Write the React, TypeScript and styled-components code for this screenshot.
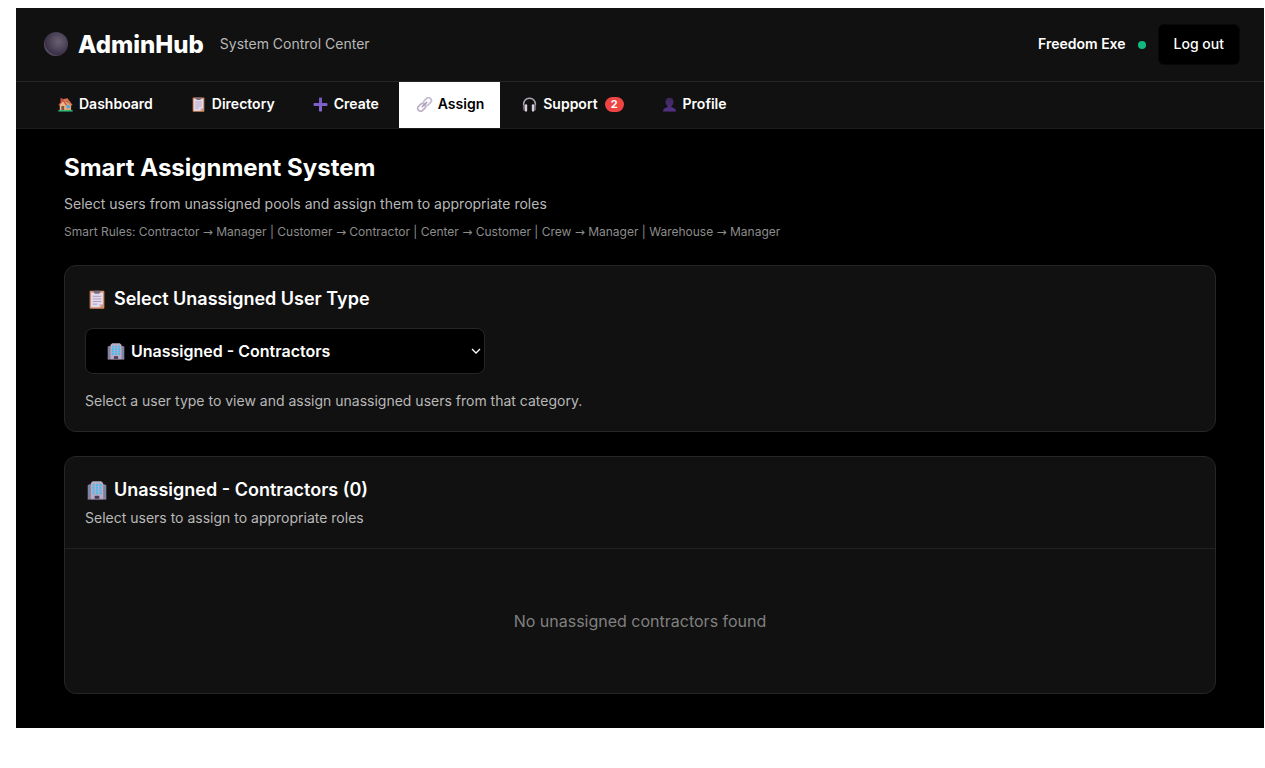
import React from "react";
import styled, { createGlobalStyle } from "styled-components";

const GlobalStyle = createGlobalStyle`
  *, *::before, *::after { box-sizing: border-box; }
  body {
    margin: 8px 1px 0 16px;
    background: #fff;
    color: #fff;
    font-family: Inter, "Liberation Sans", sans-serif;
    font-size: 14px;
  }
  h1, h2, h3, p { margin: 0; }
`;

const Shell = styled.div`
  background: #000;
`;

const Header = styled.header`
  display: flex;
  align-items: center;
  justify-content: space-between;
  padding: 16px 24px;
  background: #111;
  border-bottom: 1px solid #262626;
`;

const Group = styled.div<{ $gap: number }>`
  display: flex;
  align-items: center;
  gap: ${(p) => p.$gap}px;
`;

const Glyph = styled.svg<{ $size: number; $box: number }>`
  display: block;
  flex: none;
  width: ${(p) => p.$box}px;
  height: ${(p) => p.$size}px;
`;

const Brand = styled.h1`
  display: flex;
  align-items: center;
  gap: 6px;
  font-size: 24px;
  line-height: 31px;
  font-weight: 800;
`;

const HeaderText = styled.span<{ $strong?: boolean }>`
  padding-bottom: 2px;
  color: ${(p) => (p.$strong ? "#fff" : "#b8b8b8")};
  font-weight: ${(p) => (p.$strong ? 600 : 400)};
  line-height: 21px;
`;

const StatusDot = styled.span`
  width: 8px;
  height: 8px;
  border-radius: 50%;
  background: #10b981;
`;

const LogoutButton = styled.button`
  height: 41px;
  padding: 0 15px 2px;
  border: 1px solid #080808;
  border-radius: 6px;
  background: #000;
  color: #fff;
  font: 500 14px/21px Inter, "Liberation Sans", sans-serif;
`;

const Nav = styled.nav`
  display: flex;
  gap: 4px;
  padding: 0 24px;
  background: #111;
  border-bottom: 1px solid #1c1c1c;
`;

const Tab = styled.a<{ $active?: boolean }>`
  display: flex;
  align-items: center;
  gap: 4px;
  height: 46px;
  padding: 0 16px 2px;
  font-weight: 600;
  line-height: 20px;
  text-decoration: none;
  color: ${(p) => (p.$active ? "#000" : "#fff")};
  background: ${(p) => (p.$active ? "#fff" : "transparent")};
`;

const Badge = styled.span`
  margin-left: 3px;
  padding: 0 6px;
  border-radius: 10px;
  background: #ef4444;
  color: #fff;
  font-size: 11px;
  line-height: 15px;
  font-weight: 700;
`;

const Main = styled.main`
  display: flex;
  flex-direction: column;
  gap: 24px;
  padding: 24px 48px 34px;
`;

const Title = styled.h2`
  margin-bottom: 10px;
  font-size: 24px;
  line-height: 30px;
  font-weight: 700;
`;

const Note = styled.p`
  color: #b8b8b8;
  line-height: 21px;
`;

const Rules = styled.p`
  margin-top: 8px;
  color: #8c8c8c;
  font-size: 12px;
  line-height: 19px;
`;

const Arrow = styled.span`
  font-family: "DejaVu Sans", sans-serif;
  line-height: 1;
`;

const Card = styled.section`
  background: #111;
  border: 1px solid #262626;
  border-radius: 12px;
`;

const CardSection = styled.div<{ $gap: number; $ruled?: boolean }>`
  display: flex;
  flex-direction: column;
  gap: ${(p) => p.$gap}px;
  padding: 20px;
  border-bottom: ${(p) => (p.$ruled ? "1px solid #222" : "none")};
`;

const CardTitle = styled.h3`
  display: flex;
  align-items: center;
  gap: 5px;
  font-size: 18px;
  line-height: 26px;
  font-weight: 600;
`;

const SelectWrap = styled.div`
  position: relative;
  max-width: 400px;
`;

const SelectIcon = styled.span<{ $end?: boolean }>`
  position: absolute;
  top: 0;
  bottom: 0;
  ${(p) => (p.$end ? "right: 4px;" : "left: 20px;")}
  display: flex;
  align-items: center;
  pointer-events: none;
`;

const TypeSelect = styled.select`
  display: block;
  width: 100%;
  height: 46px;
  padding: 0 20px 0 45px;
  border: 1px solid #262626;
  border-radius: 8px;
  appearance: none;
  background: #000;
  color: #fff;
  font: 600 16px/20px Inter, "Liberation Sans", sans-serif;
`;

const Empty = styled.p`
  padding: 60px 20px;
  text-align: center;
  color: #808080;
  font-size: 16px;
  line-height: 24px;
`;

type IconProps = { size: number; box: number };

const Moon = ({ size, box }: IconProps) => (
  <Glyph $size={size} $box={box} viewBox="0 0 24 25" aria-hidden="true">
    <defs>
      <radialGradient id="moon" cx="0.6" cy="0.4" r="0.62">
        <stop offset="0" stopColor="#686071" />
        <stop offset="0.55" stopColor="#4d4458" />
        <stop offset="0.88" stopColor="#3b3046" />
        <stop offset="1" stopColor="#5e5666" />
      </radialGradient>
    </defs>
    <circle cx="12" cy="12" r="12" fill="url(#moon)" />
  </Glyph>
);

const House = ({ size, box }: IconProps) => (
  <Glyph $size={size} $box={box} viewBox="0 0 16 16" aria-hidden="true">
    <path d="M2.600 1.300h2.200V5H2.600z" fill="#c8574a" />
    <path d="M2 8l4-5 8 5v6.500H2z" fill="#dba57b" />
    <path d="M2 8L5 4l3 4.500v6H2z" fill="#e9b98a" />
    <path d="M5 2.400L10 1.300l5.600 7.100-1.500.7-4.800-4.700-3.200.4z" fill="#e0744f" />
    <path d="M5.200 2.200L.4 8.400l1 .8L5.200 4.400l3.600 5 1-.8z" fill="#d0523f" />
    <path d="M3.600 9.600h3v4.900h-3z" fill="#7d5448" />
    <path d="M9.400 8.800h3.200v3H9.400z" fill="#3fa9e8" />
    <path d="M.4 14h15.200v1.500H.4z" fill="#2fc079" />
  </Glyph>
);

const Clipboard = ({ size, box }: IconProps) => (
  <Glyph $size={size} $box={box} viewBox="0 0 16 16" aria-hidden="true">
    <rect x="1.800" y="0.600" width="12.400" height="15.200" rx="0.800" fill="#d68d67" />
    <path d="M3 2h10v9.800L10.200 14.600H3z" fill="#e4daed" />
    <path d="M13 11.800h-2.800v2.800z" fill="#c5b4d3" />
    <path d="M5.300.6h5.400v1.500l-1 1H6.300l-1-1z" fill="#776d80" />
    <path d="M4.400 5.300h7.200M4.400 7.500h7.200M4.400 9.700h7.200M4.400 11.900h3.800" stroke="#a99ab8" strokeWidth="0.800" />
  </Glyph>
);

const Plus = ({ size, box }: IconProps) => (
  <Glyph $size={size} $box={box} viewBox="0 0 16 16" aria-hidden="true">
    <defs>
      <linearGradient id="plus" x1="0" y1="0" x2="0" y2="1">
        <stop offset="0" stopColor="#6f58bd" />
        <stop offset="1" stopColor="#8b68d2" />
      </linearGradient>
    </defs>
    <path
      d="M7.200.6h1.600q.8 0 .8.800v5h5q.8 0 .8.800v1.600q0 .8-.8.8h-5v5q0 .8-.8.8H7.200q-.8 0-.8-.8v-5h-5q-.8 0-.8-.8V7.200q0-.8.8-.8h5v-5q0-.8.8-.8z"
      fill="url(#plus)"
    />
  </Glyph>
);

const Link = ({ size, box }: IconProps) => (
  <Glyph $size={size} $box={box} viewBox="0 0 16 16" aria-hidden="true">
    <g fill="none" transform="rotate(-45 8 8)">
      <rect x="-0.900" y="4.900" width="9" height="6.200" rx="3" stroke="#bdb0c8" strokeWidth="1.900" />
      <rect x="7.900" y="4.900" width="9" height="6.200" rx="3" stroke="#c8bdd2" strokeWidth="1.900" />
      <path d="M4.600 8h6.800" stroke="#a99bb5" strokeWidth="1.600" strokeLinecap="round" />
    </g>
  </Glyph>
);

const Headphones = ({ size, box }: IconProps) => (
  <Glyph $size={size} $box={box} viewBox="0 0 16 16" aria-hidden="true">
    <path d="M2.300 11C.4 5.500 3.500 1.400 8 1.400s7.600 4.100 5.700 9.600" fill="none" stroke="#aaa3b0" strokeWidth="1.600" />
    <path d="M1 9.600Q1 8 3 8.200v7Q1 14.500 1 12.500zM15 9.600Q15 8 13 8.200v7q2-.7 2-2.700z" fill="#6b6472" />
    <rect x="3" y="7.600" width="2.500" height="8" rx="1.200" fill="#d8d3dd" />
    <rect x="10.500" y="7.600" width="2.500" height="8" rx="1.200" fill="#d8d3dd" />
  </Glyph>
);

const Person = ({ size, box }: IconProps) => (
  <Glyph $size={size} $box={box} viewBox="0 0 16 16" aria-hidden="true">
    <defs>
      <linearGradient id="person" x1="0" y1="0" x2="0" y2="1">
        <stop offset="0" stopColor="#3b2856" />
        <stop offset="1" stopColor="#55308a" />
      </linearGradient>
    </defs>
    <path
      d="M8 .8c2.700 0 4.200 1.700 4.200 4.200 0 2-.8 3.700-2.100 4.700v1.100c2.800.4 4.800 1.600 4.800 4.700H1.100c0-3.100 2-4.300 4.800-4.700V9.700C4.600 8.700 3.800 7 3.800 5 3.800 2.500 5.300.8 8 .8z"
      fill="url(#person)"
    />
  </Glyph>
);

const Office = ({ size, box }: IconProps) => (
  <Glyph $size={size} $box={box} viewBox="0 0 18 18" aria-hidden="true">
    <path d="M.2 3.800L4 2.600V17H.2zM17.800 3.800L14 2.600V17h3.800z" fill="#8d819b" />
    <path d="M1.600 5v11M16.400 5v11" stroke="#4a91bd" strokeWidth="0.900" strokeDasharray="1.500 1" />
    <path d="M3.200 1.800L5 .3h8l1.800 1.500v15.500H3.200z" fill="#b8acc4" />
    <path d="M5.700 2.800v10M9 2.800v10M12.300 2.800v10" stroke="#43bdf2" strokeWidth="2" strokeDasharray="2 0.600" />
    <path d="M6.800 14h4.400v3.300H6.800z" fill="#4a3b58" />
    <path d="M.2 17.200h17.600" stroke="#9689a2" strokeWidth="0.800" />
  </Glyph>
);

const Chevron = () => (
  <Glyph $size={10} $box={10} viewBox="0 0 10 10" aria-hidden="true">
    <path d="M1 3l4 4 4-4" fill="none" stroke="#fff" strokeWidth="1.300" />
  </Glyph>
);

const tabs = [
  { label: "Dashboard", Icon: House },
  { label: "Directory", Icon: Clipboard },
  { label: "Create", Icon: Plus },
  { label: "Assign", Icon: Link, active: true },
  { label: "Support", Icon: Headphones, count: 2 },
  { label: "Profile", Icon: Person },
];

const rules = [
  ["Contractor", "Manager"],
  ["Customer", "Contractor"],
  ["Center", "Customer"],
  ["Crew", "Manager"],
  ["Warehouse", "Manager"],
];

export default function App() {
  return (
    <>
      <GlobalStyle />
      <Shell>
        <Header>
          <Group $gap={16}>
            <Brand>
              <Moon size={25} box={32} />
              AdminHub
            </Brand>
            <HeaderText>System Control Center</HeaderText>
          </Group>
          <Group $gap={12}>
            <HeaderText $strong>Freedom Exe</HeaderText>
            <StatusDot />
            <LogoutButton type="button">Log out</LogoutButton>
          </Group>
        </Header>
        <Nav>
          {tabs.map(({ label, Icon, active, count }) => (
            <Tab key={label} href="#" $active={active} aria-current={active ? "page" : undefined}>
              <Icon size={15} box={19} />
              {label}
              {count && <Badge>{count}</Badge>}
            </Tab>
          ))}
        </Nav>
        <Main>
          <section>
            <Title>Smart Assignment System</Title>
            <Note>Select users from unassigned pools and assign them to appropriate roles</Note>
            <Rules>
              Smart Rules:{" "}
              {rules.map(([from, to], i) => (
                <React.Fragment key={from}>
                  {i > 0 && " | "}
                  {from} <Arrow>→</Arrow> {to}
                </React.Fragment>
              ))}
            </Rules>
          </section>
          <Card>
            <CardSection $gap={16}>
              <CardTitle id="type-title">
                <Clipboard size={19} box={24} />
                Select Unassigned User Type
              </CardTitle>
              <SelectWrap>
                <TypeSelect aria-labelledby="type-title" defaultValue="contractors">
                  <option value="contractors">Unassigned - Contractors</option>
                </TypeSelect>
                <SelectIcon>
                  <Office size={17} box={22} />
                </SelectIcon>
                <SelectIcon $end>
                  <Chevron />
                </SelectIcon>
              </SelectWrap>
              <Note>Select a user type to view and assign unassigned users from that category.</Note>
            </CardSection>
          </Card>
          <Card>
            <CardSection $gap={4} $ruled>
              <CardTitle>
                <Office size={19} box={24} />
                Unassigned - Contractors (0)
              </CardTitle>
              <Note>Select users to assign to appropriate roles</Note>
            </CardSection>
            <Empty>No unassigned contractors found</Empty>
          </Card>
        </Main>
      </Shell>
    </>
  );
}
